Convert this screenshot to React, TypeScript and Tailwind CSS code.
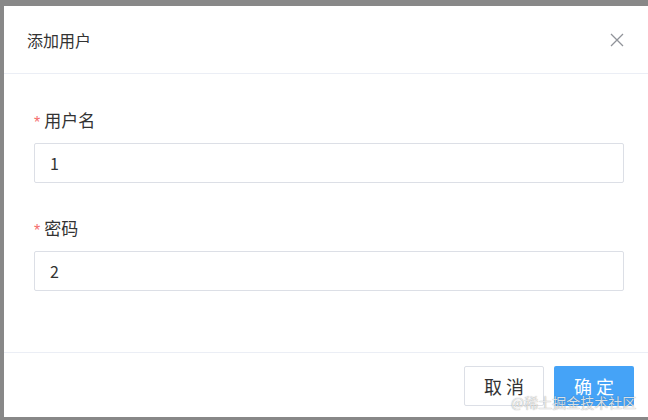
import React from 'react';

const font = { fontFamily: '"Noto Sans CJK SC", "Noto Sans", sans-serif' };

function Field({ label, value }: { label: string; value: string }) {
  return (
    <div>
      <div className="flex items-center h-[20px] text-[17px] text-[#333]">
        <span className="text-[#f56c6c] mr-[4px] text-[16px] leading-none mt-[5px] [font-family:'Liberation_Sans',sans-serif]">*</span>
        {label}
      </div>
      <div className="mt-[13px] h-[40px] w-[590px] border border-[#dcdfe6] rounded-[2px] flex items-center px-[15px] text-[16px] text-[#333]">
        {value}
      </div>
    </div>
  );
}

export default function App() {
  return (
    <div className="w-[648px] h-[420px] bg-[#888888] overflow-hidden pt-[6px] pl-[4px]" style={font}>
      <div className="relative w-[660px] h-[411px] bg-white flex flex-col">
        <div className="h-[68px] flex items-center justify-between pl-[23px] pr-[40px] border-b border-[#ebeef5]">
          <span className="text-[16px] text-[#333]">添加用户</span>
          <svg width="14" height="14" viewBox="0 0 14 14" className="mt-[1px]">
            <path d="M1 1 L13 13 M13 1 L1 13" stroke="#909399" strokeWidth="1.3" />
          </svg>
        </div>
        <div className="flex-1 pt-[36px] pl-[30px] flex flex-col gap-[35px]">
          <Field label="用户名" value="1" />
          <Field label="密码" value="2" />
        </div>
        <div className="h-[65px] border-t border-[#ebeef5] flex items-start pt-[13px] pl-[460px] gap-[10px]">
          <button className="w-[80px] h-[40px] border border-[#dcdfe6] rounded-[2px] bg-white text-[18px] text-[#333] tracking-[4px] pl-[4px]">
            取消
          </button>
          <button className="w-[80px] h-[40px] rounded-[2px] bg-[#45a3f7] text-[18px] text-white tracking-[4px] pl-[4px]">
            确定
          </button>
        </div>
        <span className="absolute left-[507px] top-[388px] text-[14px] leading-[16px] text-white/80 [text-shadow:0_0_1px_rgba(0,0,0,0.5)]">
          @稀土掘金技术社区
        </span>
      </div>
    </div>
  );
}
